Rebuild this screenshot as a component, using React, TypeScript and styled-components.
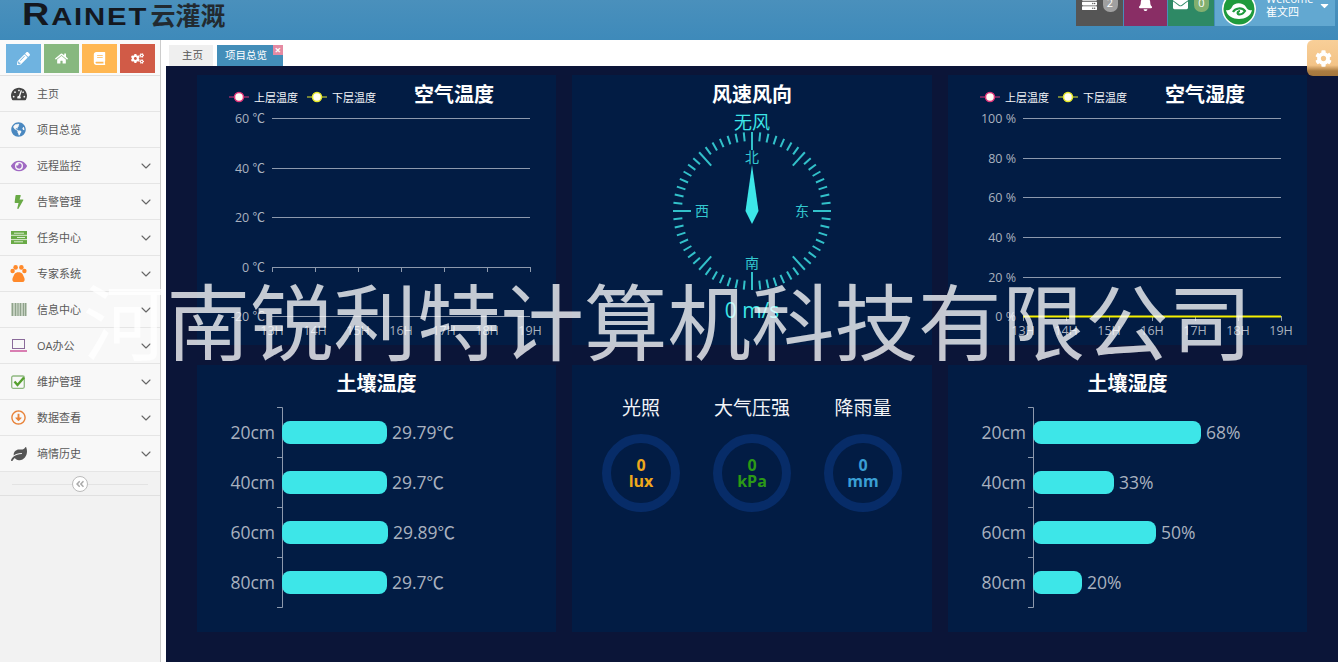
import { FC, ReactNode } from 'react';
import styled, { createGlobalStyle } from 'styled-components';
import { ChevronDown } from 'lucide-react';
import {
  FaAngleDoubleLeft,
  FaBell,
  FaBolt,
  FaBook,
  FaCaretDown,
  FaCog,
  FaCogs,
  FaEnvelope,
  FaEye,
  FaGlobeAmericas,
  FaHome,
  FaLeaf,
  FaPencilAlt,
  FaRegArrowAltCircleDown,
  FaServer,
  FaTachometerAlt,
} from 'react-icons/fa';

const SANS = `'Open Sans', 'Noto Sans CJK SC', 'Liberation Sans', sans-serif`;
const CYAN = '#3de6e8';
const AXIS = '#8d99ad';
const LABEL = '#a9b1bf';

const GlobalStyle = createGlobalStyle`
  html, body {
    margin: 0;
    height: 100%;
    overflow: hidden;
    background: #fff;
    font-family: ${SANS};
  }
`;

const Page = styled.div`
  position: relative;
  width: 1338px;
  height: 662px;
  overflow: hidden;
  display: flex;
  flex-direction: column;
`;

const Header = styled.header`
  height: 40px;
  flex: none;
  display: flex;
  justify-content: space-between;
  background: linear-gradient(#4a90bc, #3e8aba);
`;

const Logo = styled.div`
  padding-left: 22px;
  display: flex;
  align-items: baseline;
  height: 25px;
  color: #14181f;
  line-height: 29px;
  white-space: nowrap;
`;

const LogoWord = styled.span`
  display: inline-block;
  font-family: 'Liberation Sans', sans-serif;
  font-weight: 700;
  font-size: 24px;
  letter-spacing: 1.5px;
  transform: scaleX(1.22);
  transform-origin: left;
  &::first-letter {
    font-size: 31px;
  }
`;

const LogoCn = styled.span`
  margin-left: 25px;
  font-family: 'Noto Sans CJK SC', sans-serif;
  font-weight: 700;
  font-size: 25px;
  color: #222a30;
`;

const Nav = styled.nav`
  display: flex;
  height: 26px;
  margin-right: 3px;
  gap: 1px;
`;

const NavItem = styled.div<{ $bg: string; $w: number }>`
  width: ${(p) => p.$w}px;
  height: 26px;
  overflow: hidden;
  background: ${(p) => p.$bg};
  display: flex;
  align-items: flex-start;
  justify-content: center;
  gap: 6px;
  color: #fff;
  font-size: 15px;
  > svg {
    margin-top: -4px;
  }
`;

const Badge = styled.span<{ $bg: string }>`
  margin-top: -6px;
  width: 15px;
  height: 18px;
  border-radius: 7px;
  background: ${(p) => p.$bg};
  color: #fff;
  font-size: 11px;
  line-height: 18px;
  text-align: center;
`;

const UserItem = styled.div`
  width: 120px;
  height: 26px;
  overflow: hidden;
  background: #62a8d1;
  display: flex;
  color: #fff;
  padding-left: 7px;
  box-sizing: border-box;
`;

const Avatar = styled.svg`
  margin-top: -8px;
  flex: none;
  width: 34px;
  height: 34px;
`;

const UserName = styled.div`
  margin: -8px 0 0 10px;
  width: 46px;
  font-size: 11px;
  line-height: 13px;
  white-space: nowrap;
`;

const Caret = styled.span`
  margin: -2px 0 0 6px;
  font-size: 13px;
`;

const Body = styled.div`
  flex: 1;
  display: flex;
  min-height: 0;
`;

const Sidebar = styled.aside`
  width: 161px;
  flex: none;
  box-sizing: border-box;
  background: #f2f2f2;
  border-right: 1px solid #ccc;
`;

const Shortcuts = styled.div`
  height: 36px;
  box-sizing: border-box;
  padding: 4px 0 0 6px;
  display: flex;
  gap: 3px;
  background: #fafafa;
  border-bottom: 1px solid #e0e0e0;
`;

const Shortcut = styled.button<{ $bg: string }>`
  width: 35px;
  height: 29px;
  padding: 0;
  border: 0;
  background: ${(p) => p.$bg};
  color: #fff;
  font-size: 13px;
  display: flex;
  align-items: center;
  justify-content: center;
`;

const MenuRow = styled.div`
  height: 36px;
  box-sizing: border-box;
  display: flex;
  align-items: center;
  background: #f8f8f8;
  border-bottom: 1px solid #e5e5e5;
  color: #585858;
  font-size: 11px;
`;

const MenuIcon = styled.span<{ $color: string; $size?: number }>`
  width: 37px;
  flex: none;
  display: flex;
  justify-content: center;
  color: ${(p) => p.$color};
  font-size: ${(p) => p.$size ?? 16}px;
`;

const MenuLabel = styled.span`
  flex: 1;
  padding-bottom: 2px;
`;

const MenuArrow = styled.span`
  width: 22px;
  color: #666;
  display: flex;
`;

const Collapse = styled.div`
  position: relative;
  height: 24px;
  box-sizing: border-box;
  display: flex;
  align-items: center;
  justify-content: center;
  border-bottom: 1px solid #e0e0e0;
  &::before {
    content: '';
    position: absolute;
    left: 12px;
    right: 12px;
    top: 12px;
    border-top: 1px solid #e3e3e3;
  }
`;

const CollapseBtn = styled.span`
  position: relative;
  width: 16px;
  height: 16px;
  border-radius: 50%;
  border: 1px solid #bbb;
  background: #fff;
  box-sizing: border-box;
  color: #aaa;
  font-size: 10px;
  display: flex;
  align-items: center;
  justify-content: center;
`;

const Main = styled.main`
  flex: 1;
  min-width: 0;
  display: flex;
  flex-direction: column;
  padding-left: 5px;
`;

const Tabs = styled.div`
  height: 26px;
  flex: none;
  box-sizing: border-box;
  padding: 5px 0 0 3px;
  display: flex;
  gap: 4px;
`;

const Tab = styled.div<{ $active?: boolean }>`
  position: relative;
  height: 21px;
  box-sizing: border-box;
  width: ${(p) => (p.$active ? 66 : 44)}px;
  padding-left: ${(p) => (p.$active ? 8 : 13)}px;
  background: ${(p) => (p.$active ? '#438eb9' : '#efefef')};
  color: ${(p) => (p.$active ? '#fff' : '#555')};
  font-size: 10.5px;
  line-height: 21px;
`;

const TabClose = styled.span`
  position: absolute;
  right: 0;
  top: 0;
  width: 10px;
  height: 10px;
  background: #e58aa2;
  color: #fff;
  font-size: 11px;
  font-weight: 700;
  line-height: 10px;
  text-align: center;
`;

const Dashboard = styled.div`
  flex: 1;
  background: #0b1538;
  padding: 9px 0 0 31px;
  display: grid;
  grid-template-columns: 359px 360px 359px;
  grid-template-rows: 270px 267px;
  gap: 20px 16px;
  align-content: start;
`;

const Panel = styled.section`
  background: #021c44;
  min-width: 0;
`;

const PanelHead = styled.div<{ $centered?: boolean; $top?: boolean }>`
  height: 38px;
  box-sizing: border-box;
  padding-top: ${(p) => (p.$top ? 2 : 0)}px;
  display: flex;
  align-items: center;
  justify-content: ${(p) => (p.$centered ? 'center' : 'flex-start')};
  padding-left: ${(p) => (p.$centered ? 0 : 32)}px;
  color: #fff;
`;

const PanelTitle = styled.h3<{ $pushed?: boolean }>`
  margin: 0 0 0 ${(p) => (p.$pushed ? 29 : 0)}px;
  font-size: 20px;
  font-weight: 700;
  line-height: 36px;
`;

const LegendItem = styled.span`
  display: flex;
  align-items: center;
  gap: 5px;
  margin-right: 9px;
  padding-top: 4px;
  font-size: 11px;
  color: #f2f4f8;
`;

const ChartSvg = styled.svg`
  display: block;
  overflow: visible;
  width: 100%;
`;

const AxisText = styled.text`
  font-family: ${SANS};
  font-size: 12.5px;
  fill: ${LABEL};
`;

const BarText = styled.text`
  font-family: ${SANS};
  font-size: 17.5px;
  fill: ${LABEL};
`;

const CompassText = styled.text<{ $size?: number }>`
  font-family: ${SANS};
  font-size: ${(p) => p.$size ?? 14}px;
  fill: ${CYAN};
  text-anchor: middle;
`;

const GaugeRow = styled.div`
  display: flex;
  justify-content: center;
  padding-top: 31px;
`;

const Gauge = styled.div`
  width: 111px;
  display: flex;
  flex-direction: column;
  align-items: center;
`;

const GaugeTitle = styled.div`
  color: #f2f4f8;
  font-size: 19px;
  line-height: 24px;
`;

const GaugeRing = styled.div<{ $color: string }>`
  margin-top: 14px;
  width: 78px;
  height: 78px;
  box-sizing: border-box;
  border: 9px solid #072c68;
  border-radius: 50%;
  display: flex;
  flex-direction: column;
  align-items: center;
  justify-content: center;
  color: ${(p) => p.$color};
  font-size: 16px;
  font-weight: 700;
  line-height: 16px;
`;

const SettingsTab = styled.div`
  position: absolute;
  right: 0;
  top: 40px;
  width: 31px;
  height: 36px;
  border-radius: 6px 0 0 6px;
  background: linear-gradient(#f8cf98 0%, #f3c387 70%, #ac7d42 86%, #a4763c 100%);
  color: #fff;
  font-size: 17px;
  display: flex;
  align-items: flex-start;
  padding: 10px 0 0 8px;
  box-sizing: border-box;
`;

const Watermark = styled.div`
  position: absolute;
  left: 83px;
  top: 260px;
  font-family: 'Noto Sans CJK SC', sans-serif;
  font-size: 83.5px;
  line-height: 116px;
  color: rgba(255, 255, 255, 0.77);
  white-space: nowrap;
  pointer-events: none;
`;

// the sidebar glyphs that no icon set has in this shape
const TaskIcon = () => (
  <svg width="16" height="13" viewBox="0 0 16 13">
    <rect width="16" height="13" fill="#69aa46" />
    <path d="M0 4.3H16M0 8.6H16M3 2.2H13M6 6.5H14M3 10.8H12" stroke="#dcebd2" strokeWidth="1" />
  </svg>
);

const ExpertIcon = () => (
  <svg width="17" height="17" viewBox="0 0 17 17" fill="#ff892a">
    <circle cx="2.6" cy="6" r="2.2" />
    <circle cx="14.4" cy="6" r="2.2" />
    <circle cx="5.6" cy="2.4" r="2.3" />
    <circle cx="11.4" cy="2.4" r="2.3" />
    <path d="M4.5 17C2.5 17 2 15 2.6 13L4.5 9C5.8 6.6 11.2 6.6 12.5 9L14.4 13C15 15 14.5 17 12.5 17Z" />
  </svg>
);

const BarcodeIcon = () => (
  <svg width="16" height="13" viewBox="0 0 16 13">
    <rect width="16" height="13" fill="#c3cfbf" />
    <path d="M1.5 0V13M4.5 0V13M7 0V13M9.5 0V13M12.5 0V13M14.5 0V13" stroke="#8fa28b" strokeWidth="1" />
  </svg>
);

const LaptopIcon = () => (
  <svg width="17" height="13" viewBox="0 0 17 13" fill="none">
    <rect x="2.5" y="0.5" width="12" height="9" stroke="#8a6a9a" strokeWidth="1" />
    <path d="M0 12H17" stroke="#d160a0" strokeWidth="1.6" />
  </svg>
);

const CheckIcon = () => (
  <svg width="15" height="14" viewBox="0 0 15 14" fill="none">
    <rect x="0.7" y="1" width="12.6" height="12.3" rx="1.5" stroke="#8fb880" strokeWidth="1.3" />
    <path d="M3.5 6.5L6.5 10L13 2.5" stroke="#55a02e" strokeWidth="2.4" />
  </svg>
);

const menu: { label: string; icon: ReactNode; color: string; size?: number; arrow?: boolean }[] = [
  { label: '主页', icon: <FaTachometerAlt />, color: '#444' },
  { label: '项目总览', icon: <FaGlobeAmericas />, color: '#4a88c0', size: 15 },
  { label: '远程监控', icon: <FaEye />, color: '#a069c3', arrow: true },
  { label: '告警管理', icon: <FaBolt />, color: '#69aa46', size: 14, arrow: true },
  { label: '任务中心', icon: <TaskIcon />, color: '#69aa46', arrow: true },
  { label: '专家系统', icon: <ExpertIcon />, color: '#ff892a', arrow: true },
  { label: '信息中心', icon: <BarcodeIcon />, color: '#8a9a88', arrow: true },
  { label: 'OA办公', icon: <LaptopIcon />, color: '#c6699f', arrow: true },
  { label: '维护管理', icon: <CheckIcon />, color: '#69aa46', arrow: true },
  { label: '数据查看', icon: <FaRegArrowAltCircleDown />, color: '#e8833a', size: 15, arrow: true },
  { label: '墒情历史', icon: <FaLeaf />, color: '#555', arrow: true },
];

const LegendMark: FC<{ color: string }> = ({ color }) => (
  <svg width="20" height="12" viewBox="0 0 20 12">
    <path d="M0 6H20" stroke={color} strokeWidth="1" />
    <circle cx="10" cy="6" r="4.5" fill="#fffdf5" stroke={color} strokeWidth="1.5" />
  </svg>
);

const hours = ['13H', '14H', '15H', '16H', '17H', '18H', '19H'];

// y is measured from the top of the svg, which starts under the panel head
const LineChart: FC<{ x0: number; rows: { label: string; y: number }[]; flat?: boolean }> = ({
  x0,
  rows,
  flat,
}) => {
  const step = 43;
  const x1 = x0 + step * 6;
  const base = rows[rows.length - 1].y;
  const zero = flat ? base : rows[rows.length - 2].y;
  return (
    <ChartSvg height="232" viewBox="0 0 359 232">
      {rows.map((r) => (
        <g key={r.label}>
          <AxisText x={x0 - 7} y={r.y + 5} textAnchor="end">
            {r.label}
          </AxisText>
          <path d={`M${x0} ${r.y + 0.5}H${x1}`} stroke={AXIS} strokeWidth="1" />
        </g>
      ))}
      {hours.map((h, i) => (
        <g key={h}>
          <path d={`M${x0 + i * step + 0.5} ${zero}v5`} stroke={AXIS} strokeWidth="1" />
          <AxisText x={x0 + i * step} y={base + 19} textAnchor="middle">
            {h}
          </AxisText>
        </g>
      ))}
      {flat && <path d={`M${x0} ${base + 0.5}H${x1}`} stroke="#f5f000" strokeWidth="2" />}
    </ChartSvg>
  );
};

const BarChart: FC<{ axis: number; bars: { label: string; width: number; value: string }[] }> = ({
  axis,
  bars,
}) => (
  <ChartSvg height="229" viewBox="0 0 359 229">
    <path
      d={`M${axis - 5} 4.5H${axis + 0.5}V204.5H${axis - 5}M${axis - 5} 54.5H${axis}M${axis - 5} 104.5H${axis}M${axis - 5} 154.5H${axis}`}
      fill="none"
      stroke={AXIS}
      strokeWidth="1"
    />
    {bars.map((b, i) => {
      const cy = 30 + i * 50;
      return (
        <g key={b.label}>
          <BarText x={axis - 7} y={cy + 6} textAnchor="end">
            {b.label}
          </BarText>
          <rect x={axis} y={cy - 12} width={b.width} height={23} rx="8" fill={CYAN} />
          <BarText x={axis + b.width + 5} y={cy + 6}>
            {b.value}
          </BarText>
        </g>
      );
    })}
  </ChartSvg>
);

const Compass: FC = () => {
  const cx = 180;
  const cy = 98;
  const ticks = Array.from({ length: 60 }, (_, i) => i * 6);
  const major = [0, 42, 90, 138, 180, 222, 270, 318];
  return (
    <ChartSvg height="232" viewBox="0 0 360 232">
      <CompassText x={cx} y={16} $size={18}>
        无风
      </CompassText>
      {ticks.map((deg) => {
        const a = (deg * Math.PI) / 180;
        const r0 = 79;
        const r1 = r0 - (major.includes(deg) ? 18 : 9);
        return (
          <line
            key={deg}
            x1={cx + Math.sin(a) * r0}
            y1={cy - Math.cos(a) * r0}
            x2={cx + Math.sin(a) * r1}
            y2={cy - Math.cos(a) * r1}
            stroke={CYAN}
            strokeWidth="2"
            opacity="0.82"
          />
        );
      })}
      <CompassText x={cx} y={49} opacity="0.85">北</CompassText>
      <CompassText x={cx + 50} y={103} opacity="0.85">东</CompassText>
      <CompassText x={cx} y={155} opacity="0.85">南</CompassText>
      <CompassText x={cx - 50} y={103} opacity="0.85">西</CompassText>
      <path d={`M${cx} 52L${cx + 6.5} 98L${cx} 111L${cx - 6.5} 98Z`} fill={CYAN} />
      <CompassText x={cx} y={205} $size={21}>
        0 m/s
      </CompassText>
    </ChartSvg>
  );
};

const App: FC = () => (
  <Page>
    <GlobalStyle />
    <Header>
      <Logo>
        <LogoWord>RAINET</LogoWord>
        <LogoCn>云灌溉</LogoCn>
      </Logo>
      <Nav>
        <NavItem $bg="#555" $w={47}>
          <FaServer />
          <Badge $bg="#a0a0a0">2</Badge>
        </NavItem>
        <NavItem $bg="#892e65" $w={43}>
          <FaBell />
        </NavItem>
        <NavItem $bg="#2e8965" $w={46}>
          <FaEnvelope />
          <Badge $bg="#82af6f">0</Badge>
        </NavItem>
        <UserItem>
          <Avatar viewBox="0 0 34 34">
            <circle cx="17" cy="17" r="17" fill="#fff" />
            <circle cx="17" cy="17" r="15.5" fill="#1f9a3c" />
            <path d="M4 18c3 1 5-1 6-3 2-5 11-5 14 0 1 2 3 4 6 3-1 6-7 9-13 9S5 24 4 18z" fill="#fff" />
            <path d="M11 20c2-4 9-5 12-1-2 3-5 4-7 3-1-1 0-3 2-3" fill="none" stroke="#1f9a3c" strokeWidth="2.2" />
          </Avatar>
          <UserName>
            Welcome
            <br />
            崔文四
          </UserName>
          <Caret>
            <FaCaretDown />
          </Caret>
        </UserItem>
      </Nav>
    </Header>
    <Body>
      <Sidebar>
        <Shortcuts>
          <Shortcut $bg="#6fb3e0"><FaPencilAlt /></Shortcut>
          <Shortcut $bg="#87b87f"><FaHome /></Shortcut>
          <Shortcut $bg="#ffb752"><FaBook /></Shortcut>
          <Shortcut $bg="#d15b47"><FaCogs /></Shortcut>
        </Shortcuts>
        {menu.map((m) => (
          <MenuRow key={m.label}>
            <MenuIcon $color={m.color} $size={m.size}>{m.icon}</MenuIcon>
            <MenuLabel>{m.label}</MenuLabel>
            {m.arrow && <MenuArrow><ChevronDown size={16} strokeWidth={1.6} /></MenuArrow>}
          </MenuRow>
        ))}
        <Collapse>
          <CollapseBtn><FaAngleDoubleLeft /></CollapseBtn>
        </Collapse>
      </Sidebar>
      <Main>
        <Tabs>
          <Tab>主页</Tab>
          <Tab $active>
            项目总览
            <TabClose>×</TabClose>
          </Tab>
        </Tabs>
        <Dashboard>
          <Panel>
            <PanelHead $top>
              <LegendItem><LegendMark color="#e0357a" />上层温度</LegendItem>
              <LegendItem><LegendMark color="#e6e82a" />下层温度</LegendItem>
              <PanelTitle $pushed>空气温度</PanelTitle>
            </PanelHead>
            <LineChart
              x0={75}
              rows={[
                { label: '60 ℃', y: 5 },
                { label: '40 ℃', y: 55 },
                { label: '20 ℃', y: 104 },
                { label: '0 ℃', y: 154 },
                { label: '-20 ℃', y: 203 },
              ]}
            />
          </Panel>
          <Panel>
            <PanelHead $centered $top>
              <PanelTitle>风速风向</PanelTitle>
            </PanelHead>
            <Compass />
          </Panel>
          <Panel>
            <PanelHead $top>
              <LegendItem><LegendMark color="#e0357a" />上层温度</LegendItem>
              <LegendItem><LegendMark color="#e6e82a" />下层温度</LegendItem>
              <PanelTitle $pushed>空气湿度</PanelTitle>
            </PanelHead>
            <LineChart
              x0={75}
              flat
              rows={[
                { label: '100 %', y: 5 },
                { label: '80 %', y: 45 },
                { label: '60 %', y: 84 },
                { label: '40 %', y: 124 },
                { label: '20 %', y: 164 },
                { label: '0 %', y: 203 },
              ]}
            />
          </Panel>
          <Panel>
            <PanelHead $centered>
              <PanelTitle>土壤温度</PanelTitle>
            </PanelHead>
            <BarChart
              axis={85}
              bars={[
                { label: '20cm', width: 105, value: '29.79℃' },
                { label: '40cm', width: 105, value: '29.7℃' },
                { label: '60cm', width: 106, value: '29.89℃' },
                { label: '80cm', width: 105, value: '29.7℃' },
              ]}
            />
          </Panel>
          <Panel>
            <GaugeRow>
              <Gauge>
                <GaugeTitle>光照</GaugeTitle>
                <GaugeRing $color="#eea81c"><span>0</span><span>lux</span></GaugeRing>
              </Gauge>
              <Gauge>
                <GaugeTitle>大气压强</GaugeTitle>
                <GaugeRing $color="#2c9a16"><span>0</span><span>kPa</span></GaugeRing>
              </Gauge>
              <Gauge>
                <GaugeTitle>降雨量</GaugeTitle>
                <GaugeRing $color="#3a9fd4"><span>0</span><span>mm</span></GaugeRing>
              </Gauge>
            </GaugeRow>
          </Panel>
          <Panel>
            <PanelHead $centered>
              <PanelTitle>土壤湿度</PanelTitle>
            </PanelHead>
            <BarChart
              axis={85}
              bars={[
                { label: '20cm', width: 168, value: '68%' },
                { label: '40cm', width: 81, value: '33%' },
                { label: '60cm', width: 123, value: '50%' },
                { label: '80cm', width: 49, value: '20%' },
              ]}
            />
          </Panel>
        </Dashboard>
      </Main>
    </Body>
    <SettingsTab><FaCog /></SettingsTab>
    <Watermark>河南锐利特计算机科技有限公司</Watermark>
  </Page>
);

export default App;
